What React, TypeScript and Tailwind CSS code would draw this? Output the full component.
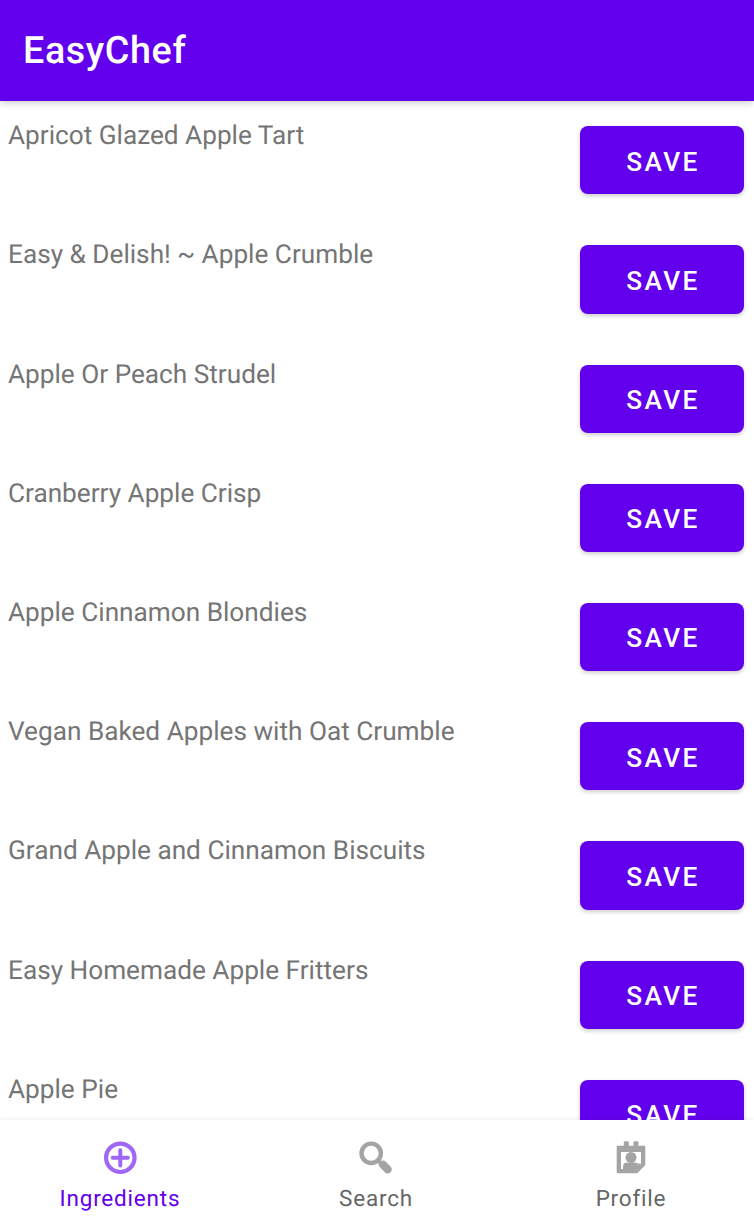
import React from "react";

const recipes = [
  "Apricot Glazed Apple Tart",
  "Easy & Delish! ~ Apple Crumble",
  "Apple Or Peach Strudel",
  "Cranberry Apple Crisp",
  "Apple Cinnamon Blondies",
  "Vegan Baked Apples with Oat Crumble",
  "Grand Apple and Cinnamon Biscuits",
  "Easy Homemade Apple Fritters",
  "Apple Pie",
];

function PlusIcon() {
  return (
    <svg width="36" height="36" viewBox="0 0 36 36" fill="none" stroke="#a066f5">
      <circle cx="18.3" cy="17.8" r="14.2" strokeWidth="4.2" />
      <path d="M18.3 10.2v15.2M10.7 17.8h15.2" strokeWidth="4" strokeLinecap="round" />
    </svg>
  );
}

function SearchIcon() {
  return (
    <svg width="36" height="36" viewBox="0 0 36 36" fill="none" stroke="#a4a4a4">
      <circle cx="13.2" cy="13.3" r="9.7" strokeWidth="4.4" />
      <path d="M19.5 20l4 4" strokeWidth="4" />
      <path d="M25 24.7l4.6 4.6" strokeWidth="8" strokeLinecap="round" />
    </svg>
  );
}

function ProfileIcon() {
  return (
    <svg width="36" height="36" viewBox="0 0 36 36" fill="#a4a4a4">
      <path
        fillRule="evenodd"
        d="M4.5 5.8H10.8V2.5Q10.8 1.2 12.1 1.2H14.5Q15.8 1.2 15.8 2.5V5.8H20.4V2.5Q20.4 1.2 21.7 1.2H24.1Q25.4 1.2 25.4 2.5V5.8H31.5Q32.3 5.8 32.3 6.6V25L24.3 33.2H4.5Q3.7 33.2 3.7 32.4V6.6Q3.7 5.8 4.5 5.8ZM8 12V29H23.5V23.5H28V12Z"
      />
      <circle cx="18" cy="17.4" r="5.5" />
      <path d="M10 30v-3.2c0-2.8 1.7-4.2 4.5-4.2h7c2.5 0 4 1.4 4 4.2V30z" />
      <path d="M24.3 31.6V25h6.4" fill="none" stroke="#b3b3b3" strokeWidth="0.8" />
    </svg>
  );
}

export default function App() {
  return (
    <div className="flex h-[1218px] w-[754px] flex-col overflow-hidden bg-white font-[Roboto,sans-serif] [text-rendering:geometricPrecision]">
      <header className="z-10 flex h-[101px] shrink-0 items-center bg-[#6200ee] pl-[23px] pt-px text-[37.7px] font-medium tracking-[0.6px] text-white shadow-[0_2px_7px_rgba(0,0,0,0.2)]">
        EasyChef
      </header>
      <main className="min-h-0 flex-1 overflow-hidden">
        {recipes.map((name) => (
          <div key={name} className="flex h-[119.2px] items-start justify-between pl-2 pr-[10px]">
            <span className="pt-[18.2px] text-[26.2px] leading-[35px] text-[#757575]">{name}</span>
            <button className="mt-[25.3px] h-[68.2px] w-[164px] rounded-[8px] bg-[#6200ee] pl-[2px] pt-[4px] text-[26.25px] font-medium tracking-[2.34px] text-white shadow-[0_2px_4px_rgba(0,0,0,0.2)]">
              SAVE
            </button>
          </div>
        ))}
      </main>
      <nav className="z-10 flex h-[98px] shrink-0 bg-white text-[22.5px] tracking-[0.8px] text-[#666] shadow-[0_0_5px_rgba(0,0,0,0.09)]">
        <div className="flex w-[240px] flex-col items-center gap-[7px] pt-5 text-[#6200ee]"><PlusIcon />Ingredients</div>
        <div className="flex w-[272px] flex-col items-center gap-[7px] pt-5"><SearchIcon />Search</div>
        <div className="flex w-[238px] flex-col items-center gap-[7px] pt-5"><ProfileIcon />Profile</div>
      </nav>
    </div>
  );
}
